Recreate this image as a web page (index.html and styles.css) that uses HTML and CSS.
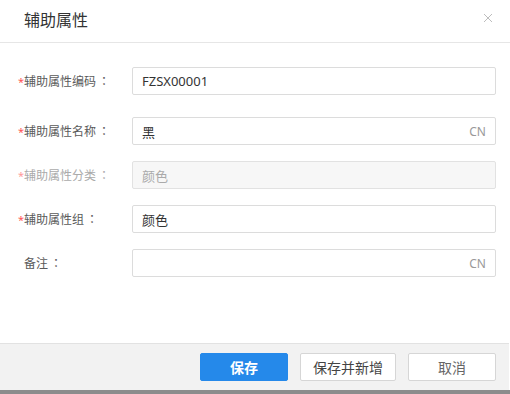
FILE: index.html
```html
<!DOCTYPE html>
<html lang="zh-CN">
<head>
    <meta charset="UTF-8">
    <title>辅助属性</title>
    <link rel="stylesheet" href="styles.css">
</head>
<body>
    <div class="dialog">
        <div class="dialog-header">
            <span class="dialog-title">辅助属性</span>
            <svg class="dialog-close" width="10" height="10" viewBox="0 0 10 10">
                <path d="M1 1L9 9M9 1L1 9" stroke="#bdbdbd" stroke-width="1" fill="none"/>
            </svg>
        </div>

        <form class="dialog-body">
            <div class="form-row first">
                <label class="required">辅助属性编码<i>：</i></label>
                <div class="field">
                    <input type="text" value="FZSX00001">
                </div>
            </div>
            <div class="form-row">
                <label class="required">辅助属性名称<i>：</i></label>
                <div class="field">
                    <input type="text" value="黑">
                    <span class="lang">CN</span>
                </div>
            </div>
            <div class="form-row disabled">
                <label class="required">辅助属性分类<i>：</i></label>
                <div class="field">
                    <input type="text" value="颜色" disabled>
                </div>
            </div>
            <div class="form-row">
                <label class="required">辅助属性组<i>：</i></label>
                <div class="field">
                    <input type="text" value="颜色">
                </div>
            </div>
            <div class="form-row">
                <label>备注<i>：</i></label>
                <div class="field">
                    <input type="text" value="">
                    <span class="lang">CN</span>
                </div>
            </div>
        </form>

        <div class="dialog-footer">
            <button class="btn btn-primary">保存</button>
            <button class="btn btn-wide">保存并新增</button>
            <button class="btn btn-cancel">取消</button>
        </div>
    </div>
</body>
</html>
```

FILE: styles.css
```css
body {
    margin: 0;
    background-color: #8c8c8c;
    font-family: "Noto Sans", "Noto Sans CJK SC", sans-serif;
}

.dialog {
    width: 510px;
    height: 390px;
    background-color: #ffffff;
    border-bottom-left-radius: 2px;
    display: flex;
    flex-direction: column;
}

.dialog-header {
    height: 42px;
    border-bottom: 1px solid #e6e6e6;
    display: flex;
    align-items: center;
    justify-content: space-between;
    padding: 0 17px 0 24px;
}

.dialog-title {
    font-size: 16px;
    color: #333;
    margin-top: -4px;
}

.dialog-close {
    margin-top: -6px;
}

.dialog-body {
    flex: 1;
    padding: 24px 14px 0 18px;
}

.form-row {
    display: flex;
    align-items: center;
    margin-bottom: 16px;
}

.form-row.first {
    margin-bottom: 22px;
}

.form-row label {
    width: 114px;
    padding-left: 6px;
    box-sizing: border-box;
    font-size: 12px;
    color: #5a5a5a;
}

.form-row label i {
    font-style: normal;
    font-family: "Noto Sans CJK JP", sans-serif;
    text-spacing-trim: space-all;
    display: inline-block;
    width: 12px;
    padding-left: 2px;
    text-align: center;
}

.form-row label.required {
    padding-left: 0;
}

.form-row label.required::before {
    content: "*";
    color: #f55;
    font-size: 11px;
    display: inline-block;
    width: 6px;
}

.field {
    flex: 1;
    position: relative;
}

.field input {
    width: 100%;
    height: 28px;
    box-sizing: border-box;
    border: 1px solid #dcdcdc;
    border-radius: 2px;
    padding: 0 36px 0 9px;
    font-family: inherit;
    font-size: 13px;
    color: #333;
    background-color: #fff;
    outline: none;
}

.lang {
    position: absolute;
    right: 10px;
    top: 6px;
    font-size: 12px;
    color: #999;
}

.form-row.disabled label {
    color: #aaa;
}

.form-row.disabled label::before {
    color: #f99;
}

.form-row.disabled input {
    background-color: #f7f7f7;
    border-color: #e2e2e2;
    color: #aaa;
}

.dialog-footer {
    height: 47px;
    margin-right: 1px;
    background-color: #f2f2f2;
    border-top: 1px solid #e2e2e2;
    display: flex;
    justify-content: flex-end;
    align-items: flex-start;
    gap: 12px;
    padding: 9px 13px 0 0;
    box-sizing: border-box;
}

.btn {
    height: 28px;
    width: 88px;
    border: 1px solid #d6d6d6;
    border-radius: 2px;
    background-color: #fff;
    font-family: inherit;
    font-size: 14px;
    color: #444;
    padding: 0;
}

.btn-primary {
    background-color: #2589ea;
    border-color: #2589ea;
    color: #fff;
    font-weight: 600;
}

.btn-wide {
    width: 96px;
}

.btn-cancel {
    color: #666;
}
```
